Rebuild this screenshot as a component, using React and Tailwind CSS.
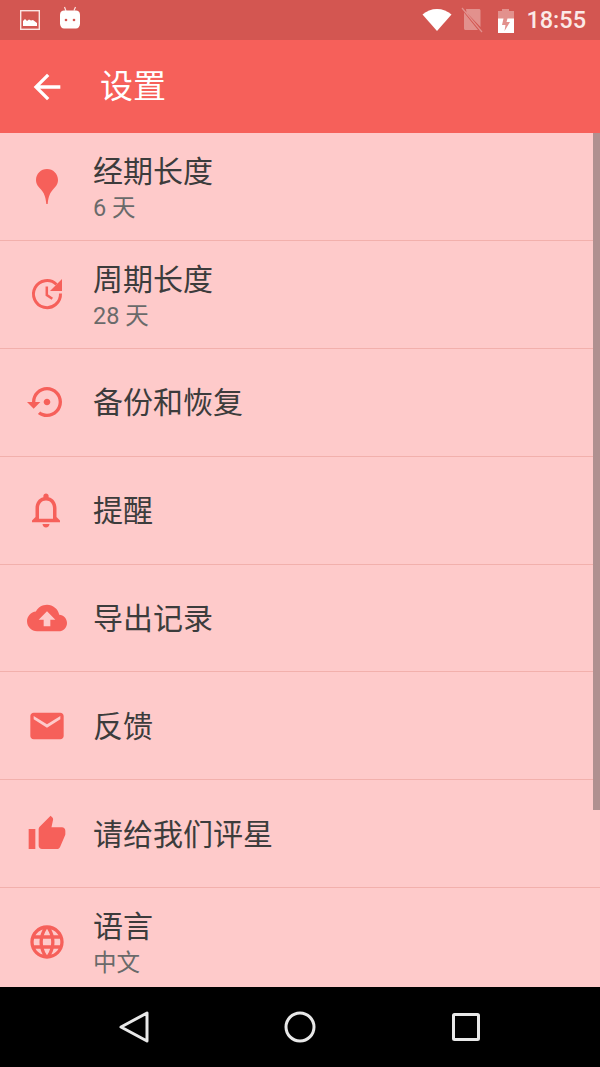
const C = "#f6605a";
const P = {
  restore: "M14 12c0-1.1-.9-2-2-2s-2 .9-2 2 .9 2 2 2 2-.9 2-2zm-2-9c-4.97 0-9 4.03-9 9H0l4 4 4-4H5c0-3.87 3.13-7 7-7s7 3.13 7 7-3.13 7-7 7c-1.51 0-2.91-.49-4.06-1.3l-1.42 1.44C8.04 20.3 9.94 21 12 21c4.97 0 9-4.03 9-9s-4.03-9-9-9z",
  bell: "M12 22c1.1 0 2-.9 2-2h-4c0 1.1.9 2 2 2zm6-6v-5c0-3.07-1.63-5.64-4.5-6.32V4c0-.83-.67-1.5-1.5-1.5s-1.5.67-1.5 1.5v.68C7.64 5.36 6 7.92 6 11v5l-2 2v1h16v-1l-2-2zm-2 1H8v-6c0-2.48 1.51-4.5 4-4.5s4 2.02 4 4.5v6z",
  cloud: "M19.35 10.04C18.67 6.59 15.64 4 12 4 9.11 4 6.6 5.64 5.35 8.04 2.34 8.36 0 10.91 0 14c0 3.31 2.69 6 6 6h13c2.76 0 5-2.24 5-5 0-2.64-2.05-4.78-4.65-4.96zM14 13v4h-4v-4H7l5-5 5 5h-3z",
  mail: "M20 4H4c-1.1 0-1.99.9-1.99 2L2 18c0 1.1.9 2 2 2h16c1.1 0 2-.9 2-2V6c0-1.1-.9-2-2-2zm0 4l-8 5-8-5V6l8 5 8-5v2z",
  thumb: "M1 21h4V9H1v12zm22-11c0-1.1-.9-2-2-2h-6.31l.95-4.57.03-.32c0-.41-.17-.79-.44-1.06L14.17 1 7.59 7.59C7.22 7.95 7 8.45 7 9v10c0 1.1.9 2 2 2h9c.83 0 1.54-.5 1.84-1.22l3.02-7.05c.09-.23.14-.47.14-.73v-2z",
  globe: "M11.99 2C6.47 2 2 6.48 2 12s4.47 10 9.99 10C17.52 22 22 17.52 22 12S17.52 2 11.99 2zm6.93 6h-2.95c-.32-1.25-.78-2.45-1.38-3.56 1.84.63 3.37 1.91 4.33 3.56zM12 4.04c.83 1.2 1.48 2.53 1.91 3.96h-3.82c.43-1.43 1.08-2.76 1.91-3.96zM4.26 14C4.1 13.36 4 12.69 4 12s.1-1.36.26-2h3.38c-.08.66-.14 1.32-.14 2 0 .68.06 1.34.14 2H4.26zm.82 2h2.95c.32 1.25.78 2.45 1.38 3.56-1.84-.63-3.37-1.9-4.33-3.56zm2.95-8H5.08c.96-1.66 2.49-2.93 4.33-3.56C8.81 5.55 8.35 6.75 8.03 8zM12 19.96c-.83-1.2-1.48-2.53-1.91-3.96h3.82c-.43 1.43-1.08 2.76-1.91 3.96zM14.34 14H9.66c-.09-.66-.16-1.32-.16-2 0-.68.07-1.35.16-2h4.68c.09.65.16 1.32.16 2 0 .68-.07 1.34-.16 2zm.25 5.56c.6-1.11 1.06-2.31 1.38-3.56h2.95c-.96 1.65-2.49 2.93-4.33 3.56zM16.36 14c.08-.66.14-1.32.14-2 0-.68-.06-1.34-.14-2h3.38c.16.64.26 1.31.26 2s-.1 1.36-.26 2h-3.38z",
};

function Mat({ d, size = 40, className = "" }) {
  return (
    <svg className={className} width={size} height={size} viewBox="0 0 24 24" fill={C} fillRule="evenodd">
      <path d={d} />
    </svg>
  );
}

function Pin() {
  return (
    <svg width="40" height="40" viewBox="0 0 40 40" fill={C}>
      <path d="M20 3C13.900 3 9 7.900 9 14c0 4.200 2.600 7 5 9.600 2.700 3 4.600 6.600 5.300 14.400h1.400c.7-7.800 2.600-11.400 5.300-14.400 2.400-2.600 5-5.400 5-9.600C31 7.900 26.100 3 20 3z" />
    </svg>
  );
}

function ClockRe() {
  return (
    <svg width="40" height="40" viewBox="0 0 40 40" fill="none">
      <path d="M29.500 10.500A13.500 13.500 0 1 0 33.500 19.500" stroke={C} strokeWidth="3" />
      <path d="M35 5v12H23z" fill={C} />
      <path d="M19.800 12.500v8.500l5.500 3.700" stroke={C} strokeWidth="2.500" />
    </svg>
  );
}

const rows = [
  { t: "经期长度", s: "6 天", i: <Pin /> },
  { t: "周期长度", s: "28 天", i: <ClockRe /> },
  { t: "备份和恢复", i: <Mat d={P.restore} /> },
  { t: "提醒", i: <Mat d={P.bell} size={42} className="-ml-[2px]" /> },
  { t: "导出记录", i: <Mat d={P.cloud} /> },
  { t: "反馈", i: <Mat d={P.mail} /> },
  { t: "请给我们评星", i: <Mat d={P.thumb} /> },
  { t: "语言", s: "中文", i: <Mat d={P.globe} /> },
];

function Row({ r, last }) {
  return (
    <div className={`h-[107.9px] shrink-0 flex items-center ${last ? "" : "border-b border-[#f2b0ac]"}`}>
      <div className="w-[93px] shrink-0 flex justify-center">
        <div className="w-10 h-10 flex items-center justify-center">{r.i}</div>
      </div>
      <div className={`flex flex-col ${last ? "" : "pt-[2px]"}`}>
        <div className="text-[30px] leading-[38px] text-[#3c3c3c]">{r.t}</div>
        {r.s && <div className="text-[23.5px] leading-[32px] text-[#6a6a6a] mt-[1px] -mb-[3px]">{r.s}</div>}
      </div>
    </div>
  );
}

export default function App() {
  return (
    <div
      className="w-[600px] h-[1067px] flex flex-col overflow-hidden bg-[#fecaca]"
      style={{ fontFamily: 'Roboto, "Noto Sans CJK SC", sans-serif' }}
    >
      <div className="h-10 shrink-0 bg-[#d35651] flex items-center justify-between">
        <div className="flex items-center">
          <svg className="ml-5" width="20" height="20" viewBox="0 0 20 20" fill="none">
            <rect x="0.700" y="0.700" width="18.600" height="18.600" stroke="#fbe4e2" strokeWidth="1.400" />
            <path d="M3 16v-5l2-2 2 2 2-1.500 2 1 2-.5 4 3v3z" fill="#fff" />
          </svg>
          <svg className="ml-[20px] -mt-1" width="20" height="24" viewBox="0 0 20 24" fill="none">
            <path d="M4.500 1l1.500 4M15.500 1L14 4.500" stroke="#fbe4e2" strokeWidth="1.200" />
            <path d="M4 4.500h12c2 0 4 1.500 4 4v9c0 3-2 5-4 5H4c-2 0-4-2-4-5v-9c0-2.500 2-4 4-4z" fill="#fff" />
            <circle cx="6" cy="14" r="1.300" fill="#d35651" />
            <circle cx="14" cy="14" r="1.300" fill="#d35651" />
          </svg>
        </div>
        <div className="flex items-center">
          <svg width="30" height="24" viewBox="0 0 30 24" fill="#fff">
            <path d="M15 23L0.500 6.500C4.500 3 9.500 1 15 1s10.500 2 14.500 5.500z" />
          </svg>
          <svg className="ml-[9px]" width="22" height="26" viewBox="0 0 22 26" fill="none">
            <path d="M5 2h13c.8 0 1.500.700 1.500 1.500V20L5.500 5.500 5 2zM3 5.500v16c0 .800.700 1.500 1.500 1.500H17L3 5.500z" fill="#fff" fillOpacity="0.350" />
            <path d="M1 1l20 24" stroke="#fff" strokeOpacity="0.350" strokeWidth="1.200" />
          </svg>
          <svg className="ml-[14px]" width="18" height="26" viewBox="0 0 18 26" fill="none">
            <path d="M5 2h7v2h5v22H1V4h4z" fill="#fff" fillOpacity="0.350" />
            <path d="M1 11.500h5.500L5 18h3.500l-1 6 5.500-9H9.500l1-3.500H17V26H1z" fill="#fff" />
          </svg>
          <span className="ml-[11px] mr-[14px] pt-[2px] text-[23.5px] leading-none font-medium text-[#fbe9e7]">18:55</span>
        </div>
      </div>

      <div className="h-[93px] shrink-0 bg-[#f6605a] flex items-center">
        <svg className="ml-[27px]" width="40" height="40" viewBox="0 0 24 24" fill="#fff">
          <path d="M20 11H7.830l5.590-5.590L12 4l-8 8 8 8 1.410-1.410L7.830 13H20v-2z" />
        </svg>
        <span className="ml-[33px] text-[33px] leading-none text-white">设置</span>
      </div>

      <div className="relative flex-1 min-h-0 overflow-hidden flex flex-col">
        {rows.map((r, i) => (
          <Row key={r.t} r={r} last={i === rows.length - 1} />
        ))}
        <div className="absolute right-0 top-0 w-[7px] h-[677px] bg-[#b09090]" />
      </div>

      <div className="h-20 shrink-0 bg-black flex items-center justify-center relative">
        <div className="w-[400px] flex items-center justify-between pl-[19px] pr-[19px]">
          <svg width="30" height="32" viewBox="0 0 30 32" fill="none">
            <path d="M2 16L28 2v28z" stroke="#e8e8e8" strokeWidth="3" strokeLinejoin="round" />
          </svg>
          <svg width="32" height="32" viewBox="0 0 32 32" fill="none">
            <circle cx="16" cy="16" r="14" stroke="#e8e8e8" strokeWidth="3" />
          </svg>
          <svg width="30" height="30" viewBox="0 0 30 30" fill="none">
            <rect x="2.500" y="2.500" width="25" height="25" rx="1" stroke="#e8e8e8" strokeWidth="3" />
          </svg>
        </div>
      </div>
    </div>
  );
}
